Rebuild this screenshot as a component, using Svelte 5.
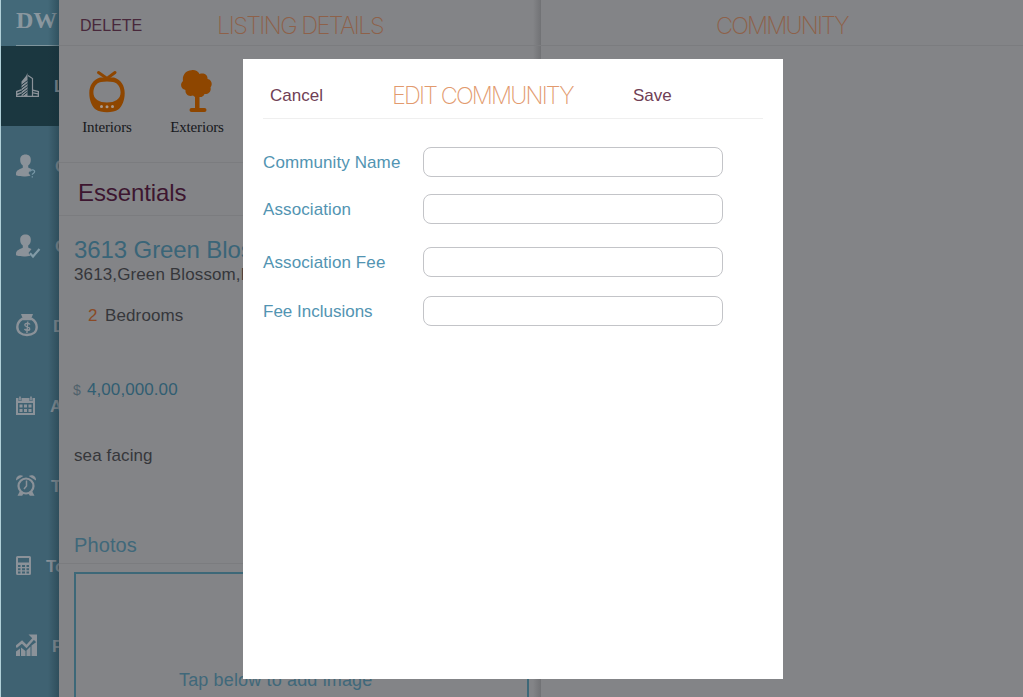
<script lang="ts">
	interface NavItem {
		icon: string;
		label: string;
		left: number;
		active?: boolean;
	}

	const nav: NavItem[] = [
		{ icon: 'building', label: 'L', left: 54, active: true },
		{ icon: 'lead', label: 'C', left: 55 },
		{ icon: 'client', label: 'C', left: 55 },
		{ icon: 'money', label: 'D', left: 53 },
		{ icon: 'calendar', label: 'A', left: 50 },
		{ icon: 'clock', label: 'T', left: 51 },
		{ icon: 'calculator', label: 'To', left: 46 },
		{ icon: 'chart', label: 'F', left: 52 }
	];

	let form = $state({ name: '', association: '', fee: '', inclusions: '' });
</script>

<div class="app">
	<nav class="sidebar">
		<div class="brand"><span>DW</span></div>
		{#each nav as item}
			<div class="nav-item" class:active={item.active}>
				<svg class="nav-icon" viewBox="0 0 26 26">
					{#if item.icon === 'building'}
						<path d="M5.500 24V8.500L10 3l1.500-3v24z" />
						<path d="M12 2.500l4.500 3V23.500" fill="none" stroke="currentColor" stroke-width="1.200" />
						<path class="cut" d="M5 12.500l6.500-5M5 15.500l6.500-5M5 18.500l6.500-5M5 21.500l6.500-5M6.500 23l5-4" />
						<path d="M0 22.700h23V24H0zM0 18l5.500-2v1.600L0 19.700zM0 21l5.500-2v1.600L0 22.700zM0 18h1.300v5H0zM17 16.500l6 1.500v5.500h-1.300V19l-4.700-1zM17 19.300l5 1v1.300l-5-1z" />
					{:else if item.icon === 'lead' || item.icon === 'client'}
						<path d="M9.500 1.500C6 1.500 4 3.700 4.200 7c0 2.300.9 4.300 2.600 5.600v2.100C4 16.400 0 16.800 0 20.800v1.400c3.500 1.500 10.500 1.500 14.500.5l-2-2.700 3-4c-1.300-.6-2.500-.9-3.300-1.500v-1.900c1.700-1.300 2.600-3.300 2.600-5.600.2-3.300-1.800-5.500-5.300-5.500z" />
						{#if item.icon === 'lead'}
							<path d="M14.300 18.500c.3-2.300 4.500-2.200 4.300.3-.1 1.500-2.200 1.300-2.300 3M16.300 23.200v1.300" fill="none" stroke="#7898a7" stroke-width="1.300" />
						{:else}
							<path d="M14 20.300l3 3.200 6.500-7.500" fill="none" stroke="#829ba7" stroke-width="2.200" />
						{/if}
					{:else if item.icon === 'money'}
						<path d="M5 1h12l-1.500 4h-9z" />
						<path d="M6 6h10c3 2 4.700 4.500 4.700 8 0 5-4 8-9.700 8S1.300 19 1.300 14C1.300 10.500 3 8 6 6z" fill="none" stroke="currentColor" stroke-width="2.400" />
						<path d="M14 11.500c-1-1.700-5-1.700-5.200.4-.2 2.500 5 1.600 4.900 4-.1 2-4.200 2-5.200 0M11.800 8.500L10.900 20" fill="none" stroke="currentColor" stroke-width="1.400" />
					{:else if item.icon === 'calendar'}
						<path fill-rule="evenodd" d="M0 5h2.500v3h3V5h8v3h3V5H19v17H0zM2 10v10h15V10z" />
						<path d="M3.200 3.500h1.600v4H3.200zM14.200 3.500h1.600v4h-1.600zM3.500 11.500h3v3h-3zM8 11.500h3v3H8zM12.500 11.500h3v3h-3zM3.500 16h3v3h-3zM8 16h3v3H8zM12.500 16h3v3h-3z" />
					{:else if item.icon === 'clock'}
						<circle cx="10" cy="13" r="7.500" fill="none" stroke="currentColor" stroke-width="2.200" />
						<path d="M10.500 7.500V13L8 16" fill="none" stroke="currentColor" stroke-width="1.500" />
						<path d="M4 18l-2.500 4.700h4.700l1.300-2.200zM16 18l2.500 4.700h-4.700l-1.300-2.200z" />
						<path d="M0 7.500C-.3 3.500 3.500 1 7.300 3zM12.700 3C16.500 1 20.300 3.500 20 7.500z" />
					{:else if item.icon === 'calculator'}
						<path fill-rule="evenodd" d="M1.500 3h12q1.500 0 1.500 1.500v16q0 1.500-1.500 1.500h-12Q0 22 0 20.500v-16Q0 3 1.500 3zM2 5v4.500h11V5zM2 12v2h2.500v-2zM6 12v2h3v-2zM10.500 12v2H13v-2zM2 15.300v2h2.500v-2zM6 15.300v2h3v-2zM10.500 15.300v2H13v-2zM2 18.500v2h2.500v-2zM6 18.500v2h3v-2zM10.500 18.500v2H13v-2z" />
					{:else}
						<path d="M0 18.500l4-3V23H0zM5 14.500L9.500 18v5H5zM10.500 17.500l4-4V23h-4zM15.500 12.500l5.500-4V23h-5.500z" />
						<path d="M0 14l6-5 4.500 4.500L18 5" fill="none" stroke="currentColor" stroke-width="2.500" />
						<path d="M12.500 1.500H21V10z" />
					{/if}
				</svg>
				<span class="nav-label" style="margin-left: {item.left - 42}px">{item.label}</span>
			</div>
		{/each}
	</nav>

	<section class="panel listing">
		<header class="bar">
			<span class="delete">DELETE</span>
			<h1 class="title">LISTING DETAILS</h1>
		</header>

		<div class="categories">
			<div class="category">
				<svg width="36" height="44" viewBox="0 0 36 44">
					<path d="M9.500 2.500L18 8.500l8-6" fill="none" stroke="currentColor" stroke-width="3" stroke-linecap="round" />
					<path fill-rule="evenodd" d="M11 7.500h14c6.700 2 10.700 8 10.700 15.500 0 8-3 14-6.500 16.500-5 3.500-17.400 3.500-22.400 0C3.300 37 .3 31 .3 23 .3 15.500 4.300 9.500 11 7.500zM12 12c-5 1-7.600 5.500-7.600 10.500 0 6.700 5.600 10 13.600 10s13.600-3.300 13.600-10c0-5-2.600-9.500-7.600-10.500-3.500-.7-8.500-.7-12 0z" />
					<circle class="dot" cx="12.500" cy="36.500" r="1.500" />
					<circle class="dot" cx="18" cy="36.800" r="1.500" />
					<circle class="dot" cx="23.500" cy="36.500" r="1.500" />
				</svg>
				<span>Interiors</span>
			</div>
			<div class="category">
				<svg width="36" height="44" viewBox="0 0 36 44">
					<path d="M14 25.500c-5 1.500-8-1.500-7.500-5.500-4.500-1-6-6-2.500-9C3 5 7 .2 12.500.2c3-.7 6.500.8 8 3.800C25 2.500 29 5 28.500 9c4 .5 5.500 5.500 3 8.500 1 4-2 7-6 6.500-1 2.500-3 3.300-5 3V38h5q2 0 2 2t-2 2h-13q-2 0-2-2t2-2H16V27z" />
				</svg>
				<span>Exteriors</span>
			</div>
		</div>

		<h2 class="section">Essentials</h2>

		<div class="details">
			<div class="name">3613 Green Blossom</div>
			<div class="address">3613,Green Blossom,F</div>
			<div class="rooms"><b>2</b>Bedrooms</div>
			<div class="price"><i>$</i>4,00,000.00</div>
			<div class="note">sea facing</div>
		</div>

		<h3 class="photos">Photos</h3>
		<div class="dropzone">Tap below to add image</div>
	</section>

	<section class="panel community">
		<header class="bar">
			<h1 class="title">COMMUNITY</h1>
		</header>
	</section>

	<div class="modal">
		<header class="modal-head">
			<button class="cancel">Cancel</button>
			<h1 class="title">EDIT COMMUNITY</h1>
			<button class="save">Save</button>
		</header>

		<form>
			<label><span>Community Name</span><input bind:value={form.name} /></label>
			<label><span>Association</span><input bind:value={form.association} /></label>
			<label class="fee"><span>Association Fee</span><input bind:value={form.fee} /></label>
			<label class="inclusions"><span>Fee Inclusions</span><input bind:value={form.inclusions} /></label>
		</form>
	</div>
</div>

<style>
	:global(body) {
		margin: 0;
		overflow: hidden;
	}

	.app {
		position: relative;
		display: grid;
		grid-template-columns: 59px 482px 482px;
		width: 1023px;
		height: 697px;
		overflow: hidden;
		background: #838487;
		font-family: 'Liberation Sans', Arial, sans-serif;
		font-size: 17px;
		color: #36373b;
	}

	.app * {
		box-sizing: border-box;
	}

	h1,
	h2,
	h3 {
		margin: 0;
		font-weight: normal;
	}

	.sidebar {
		position: relative;
		overflow: hidden;
		background: #3f6272;
		border-left: 1px solid #b0d0d8;
		color: #8b9299;
	}

	/* shadow cast by the listing panel */
	.sidebar::after {
		content: '';
		position: absolute;
		top: 0;
		right: 0;
		bottom: 0;
		width: 11px;
		background: linear-gradient(to right, rgba(20, 45, 55, 0), rgba(20, 45, 55, 0.38));
	}

	.brand {
		height: 46px;
		padding: 7px 0 0 15px;
		background: #436979;
		font: bold 24px/27px 'Liberation Serif', serif;
		color: #8a979f;
	}

	.brand span {
		display: block;
		height: 39px;
		border-bottom: 1px solid #7f959d;
	}

	.nav-item {
		display: flex;
		align-items: center;
		height: 80px;
		padding-left: 15px;
	}

	.nav-item.active {
		background: #1b3740;
	}

	.nav-icon {
		flex: none;
		width: 26px;
		height: 26px;
		fill: currentColor;
	}

	.cut {
		fill: none;
		stroke: #1b3740;
		stroke-width: 1;
	}

	.nav-label {
		padding-top: 1px;
		font-weight: bold;
		font-size: 17px;
	}

	.panel {
		min-width: 0;
	}

	.listing {
		background: linear-gradient(to right, transparent 474px, #717275 482px);
	}

	.bar {
		display: flex;
		align-items: center;
		height: 46px;
		border-bottom: 1px solid #7b7c7f;
	}

	.title {
		font-family: Inter, Roboto, sans-serif;
		font-weight: 200;
		font-size: 23.5px;
		line-height: 30px;
		letter-spacing: -1.85px;
		white-space: nowrap;
		color: #8e6149;
	}

	.delete {
		width: 158px;
		padding: 6px 0 0 21px;
		font-size: 16px;
		color: #48283b;
	}

	.listing .title,
	.community .title {
		padding-top: 7px;
	}

	.listing .title {
		letter-spacing: -1.55px;
	}

	.community .title {
		margin-left: 175px;
	}

	.categories {
		display: flex;
		height: 117px;
		padding: 24px 0 0 12px;
		border-bottom: 1px solid #7b7c7f;
	}

	.category {
		display: flex;
		flex-direction: column;
		align-items: center;
		width: 72px;
		margin-right: 18px;
		font: 15px/18px 'Liberation Serif', serif;
		letter-spacing: -0.15px;
		color: #17181c;
	}

	.category svg {
		margin-bottom: 4px;
		fill: currentColor;
		color: #8e4600;
	}

	.category .dot {
		fill: #a8998c;
	}

	.section {
		height: 53px;
		padding-left: 19px;
		border-bottom: 1px solid #7b7c7f;
		font-size: 24px;
		line-height: 60px;
		letter-spacing: -0.1px;
		color: #3d1630;
	}

	.details {
		height: 316px;
		padding: 20px 0 0 15px;
		letter-spacing: 0.12px;
		white-space: nowrap;
	}

	.name {
		font-size: 24px;
		line-height: 28px;
		letter-spacing: -0.1px;
		color: #3a6578;
	}

	.address {
		padding-top: 1px;
		line-height: 20px;
	}

	.rooms {
		margin-top: 21px;
		padding-left: 14px;
		line-height: 20px;
	}

	.rooms b {
		display: inline-block;
		width: 17px;
		font-weight: normal;
		color: #8a4a26;
	}

	.price {
		margin-top: 54px;
		line-height: 20px;
		letter-spacing: 0.08px;
		color: #315e72;
	}

	.price i {
		display: inline-block;
		width: 13px;
		margin-left: -1px;
		margin-right: 1px;
		font-style: normal;
		font-size: 14px;
		color: #50616b;
	}

	.note {
		margin-top: 46px;
		line-height: 20px;
	}

	.photos {
		height: 32px;
		padding-left: 15px;
		border-bottom: 1px solid #7b7c7f;
		font-size: 20px;
		line-height: 27px;
		letter-spacing: 0.1px;
		color: #40687a;
	}

	.dropzone {
		width: 455px;
		height: 200px;
		margin: 8px 0 0 15px;
		padding: 94px 0 0 103px;
		border: 2px solid #3d6878;
		font-size: 18px;
		line-height: 24px;
		letter-spacing: 0.15px;
		color: #40687a;
	}

	.modal {
		position: absolute;
		top: 59px;
		left: 243px;
		width: 540px;
		height: 620px;
		padding: 0 20px;
		background: #fff;
	}

	.modal-head {
		display: flex;
		align-items: center;
		height: 60px;
		padding-top: 15px;
		border-bottom: 1px solid #efefef;
	}

	.modal-head .title {
		width: 240px;
		color: #e29a6e;
	}

	button {
		padding: 0;
		border: 0;
		background: none;
		font: inherit;
		text-align: left;
		color: #704055;
	}

	.cancel {
		width: 129px;
		padding-left: 7px;
	}

	.save {
		margin-left: 1px;
	}

	form {
		padding-top: 28px;
	}

	label {
		display: flex;
		align-items: center;
		height: 30px;
		margin-bottom: 17px;
		letter-spacing: 0.1px;
		color: #5294b2;
	}

	label.fee {
		margin-top: 23px;
	}

	label.inclusions {
		margin-top: 19px;
		letter-spacing: 0;
	}

	label span {
		width: 160px;
		padding-top: 2px;
	}

	input {
		width: 300px;
		height: 30px;
		padding: 0 8px;
		border: 1px solid #c3c4c8;
		border-radius: 8px;
		background: #fff;
		font: inherit;
		outline: none;
	}
</style>
